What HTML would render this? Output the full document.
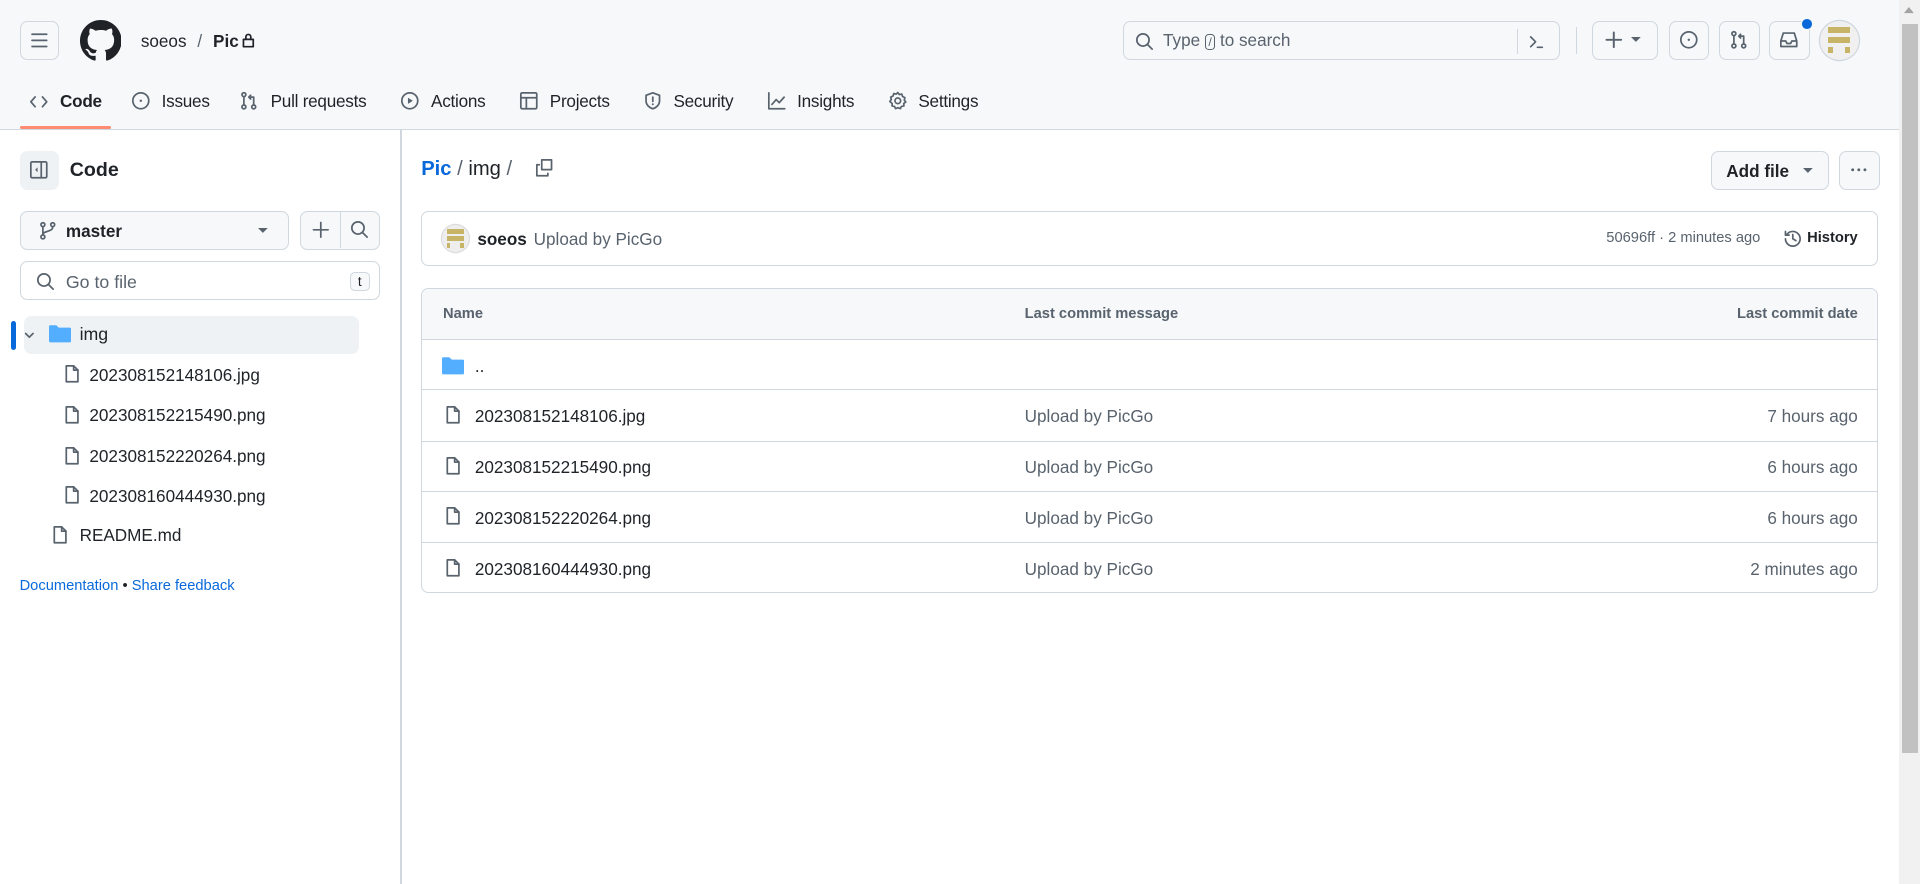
<!DOCTYPE html>
<html><head><meta charset="utf-8"><style>
html{zoom:1.22449}
body{margin:0;width:1568px;height:722px;overflow:hidden;position:relative;background:#fff;font-family:"Liberation Sans",sans-serif;color:#1f2328;font-size:14px}
.a{position:absolute;white-space:nowrap}
.btn{position:absolute;border:1px solid #d0d7de;border-radius:6px;background:#f6f8fa;box-sizing:border-box}
svg{display:block}
.ic{fill:none;stroke:#59636e;stroke-width:1.4;stroke-linecap:round;stroke-linejoin:round}
.row{position:absolute;left:0;right:0;border-top:1px solid #d0d7de;height:41px}
.t{position:absolute;top:13px;white-space:nowrap}
.tabs span{letter-spacing:-0.2px}
</style></head><body>
<!-- header -->
<div class="a" style="left:0;top:0;width:1551px;height:105px;background:#f6f8fa;border-bottom:1px solid #d0d7de"></div>
<div class="btn" style="left:16px;top:17px;width:32px;height:32px"><svg width="30" height="30"><path class="ic" d="M9 10h12M9 15h12M9 20h12"/></svg></div>
<svg class="a" style="left:65px;top:16px" width="34" height="34" viewBox="0 0 16 16"><path fill="#1f2328" d="M8 0C3.58 0 0 3.58 0 8c0 3.54 2.29 6.53 5.47 7.59.4.07.55-.17.55-.38 0-.19-.01-.82-.01-1.49-2.01.37-2.53-.49-2.69-.94-.09-.23-.48-.94-.82-1.13-.28-.15-.68-.52-.01-.53.63-.01 1.08.58 1.23.82.72 1.21 1.87.87 2.33.66.07-.52.28-.87.51-1.07-1.78-.2-3.64-.89-3.64-3.95 0-.87.31-1.59.82-2.15-.08-.2-.36-1.02.08-2.12 0 0 .67-.21 2.2.82.64-.18 1.32-.27 2-.27.68 0 1.36.09 2 .27 1.53-1.04 2.2-.82 2.2-.82.44 1.1.16 1.92.08 2.12.51.56.82 1.27.82 2.15 0 3.07-1.87 3.75-3.65 3.95.29.25.54.73.54 1.48 0 1.07-.01 1.93-.01 2.2 0 .21.15.46.55.38A8.013 8.013 0 0016 8c0-4.42-3.58-8-8-8z"/></svg>
<div class="a" style="left:115px;top:25px;font-size:14px">soeos <span style="color:#59636e;margin:0 5px">/</span> <b style="font-weight:600">Pic</b></div>
<svg class="a" style="left:197px;top:26px" width="12" height="13"><rect x="2" y="6" width="8" height="6" class="ic" style="stroke:#1f2328"/><path class="ic" style="stroke:#1f2328" d="M4 6V4a2 2 0 014 0v2"/></svg>
<!-- tabs -->
<div class="a tabs" style="top:74px;left:0;font-size:14px;color:#1f2328">
<svg class="a" style="left:24px;top:1px" width="16" height="16"><path class="ic" d="M5 4L1.5 8 5 12M11 4l3.5 4-3.5 4"/></svg>
<span class="a" style="left:49px;font-weight:600">Code</span>
<svg class="a" style="left:107px;top:0" width="16" height="16"><circle cx="8" cy="8" r="6.5" class="ic"/><circle cx="8" cy="8" r="1" fill="#59636e"/></svg>
<span class="a" style="left:132px">Issues</span>
<svg class="a" style="left:195px;top:0" width="16" height="16"><circle cx="4" cy="3" r="1.6" class="ic"/><circle cx="4" cy="13" r="1.6" class="ic"/><circle cx="12" cy="13" r="1.6" class="ic"/><path class="ic" d="M4 5v6M12 11V5H8M9.5 3.5L8 5l1.5 1.5"/></svg>
<span class="a" style="left:221px">Pull requests</span>
<svg class="a" style="left:327px;top:0" width="16" height="16"><circle cx="8" cy="8" r="6.5" class="ic"/><path d="M6.5 5.5v5l4-2.5z" fill="#59636e"/></svg>
<span class="a" style="left:352px">Actions</span>
<svg class="a" style="left:424px;top:0" width="16" height="16"><rect x="1.5" y="1.5" width="13" height="13" rx="1" class="ic"/><path class="ic" d="M1.5 5.5h13M6 5.5v9"/></svg>
<span class="a" style="left:449px">Projects</span>
<svg class="a" style="left:525px;top:0" width="16" height="16"><path class="ic" d="M8 1.5l5.5 2v4.5c0 3.3-2.5 5.6-5.5 6.5-3-.9-5.5-3.2-5.5-6.5V3.5z"/><path class="ic" d="M8 5v3.5"/><circle cx="8" cy="10.8" r=".8" fill="#59636e"/></svg>
<span class="a" style="left:550px">Security</span>
<svg class="a" style="left:626px;top:0" width="16" height="16"><path class="ic" d="M1.5 1.5v13h13M4 11l3.5-4 2.5 2.5L14 5"/></svg>
<span class="a" style="left:651px">Insights</span>
<svg class="a" style="left:725px;top:0" width="16" height="16"><circle cx="8" cy="8" r="2.3" class="ic"/><path class="ic" d="M8 1.3l1.3 1.6 2-.4.6 2 1.9.9-.5 2 1.2 1.6-1.6 1.2.1 2-2 .4-.9 1.8-1.9-.8-2 .8-.9-1.8-2-.4.1-2L1.5 8.6l1.2-1.6-.5-2 1.9-.9.6-2 2 .4z"/></svg>
<span class="a" style="left:750px">Settings</span>
</div>
<div class="a" style="left:16px;top:103px;width:75px;height:2px;background:#fd8c73;border-radius:2px"></div>
<!-- search -->
<div class="btn" style="left:917px;top:17px;width:357px;height:32px;background:#f6f8fa">
<svg class="a" style="left:9px;top:8px" width="16" height="16"><circle cx="6.5" cy="6.5" r="5" class="ic"/><path class="ic" d="M10.2 10.2L14 14"/></svg>
<span class="a" style="left:32px;top:7px;color:#59636e;font-size:14px">Type <span style="border:1px solid #59636e;border-radius:3px;font-size:10px;padding:0 2px">/</span> to search</span>
<div class="a" style="left:321px;top:6px;width:1px;height:20px;background:#d0d7de"></div>
<svg class="a" style="left:329px;top:8px" width="16" height="16"><path class="ic" d="M3 4l4 4-4 4M8.5 12.5h4"/></svg>
</div>
<div class="a" style="left:1287px;top:22px;width:1px;height:22px;background:#d0d7de"></div>
<div class="btn" style="left:1300px;top:17px;width:54px;height:32px"><svg class="a" style="left:9px;top:7px" width="16" height="16"><path class="ic" style="stroke-width:1.6" d="M8 2v12M2 8h12"/></svg><svg class="a" style="left:31px;top:12px" width="8" height="6"><path d="M0 0h8L4 4z" fill="#59636e"/></svg></div>
<div class="btn" style="left:1363px;top:17px;width:33px;height:32px"><svg class="a" style="left:7px;top:7px" width="16" height="16"><circle cx="8" cy="8" r="6.5" class="ic"/><circle cx="8" cy="8" r="1" fill="#59636e"/></svg></div>
<div class="btn" style="left:1404px;top:17px;width:33px;height:32px"><svg class="a" style="left:7px;top:7px" width="16" height="16"><circle cx="4" cy="3" r="1.6" class="ic"/><circle cx="4" cy="13" r="1.6" class="ic"/><circle cx="12" cy="13" r="1.6" class="ic"/><path class="ic" d="M4 5v6M12 11V5H8M9.5 3.5L8 5l1.5 1.5"/></svg></div>
<div class="btn" style="left:1445px;top:17px;width:33px;height:32px"><svg class="a" style="left:7px;top:7px" width="16" height="16"><path class="ic" d="M1.5 9L3.5 2.5h9L14.5 9v4.5h-13zM1.5 9h4l1 2h3l1-2h4"/></svg></div>
<div class="a" style="left:1471px;top:15px;width:8px;height:8px;border-radius:50%;background:#0969da;border:1px solid #f6f8fa"></div>
<div class="a" style="left:1486px;top:17px;width:32px;height:32px;border-radius:50%;background:#f0f0f0;overflow:hidden;box-shadow:0 0 0 1px #d0d7de">
<div class="a" style="left:7px;top:5px;width:18px;height:5px;background:#c8b466"></div>
<div class="a" style="left:7px;top:13px;width:18px;height:5px;background:#c8b466"></div>
<div class="a" style="left:7px;top:21px;width:4px;height:5px;background:#c8b466"></div>
<div class="a" style="left:21px;top:21px;width:4px;height:5px;background:#c8b466"></div></div>
<!-- scrollbar -->
<div class="a" style="left:1551px;top:0;width:17px;height:722px;background:#f1f1f1"></div>
<div class="a" style="left:1553px;top:20px;width:13px;height:595px;background:#c1c1c1"></div>
<svg class="a" style="left:1555px;top:6px" width="9" height="6"><path d="M0 5h8L4 0z" fill="#a3a3a3"/></svg>
<!-- sidebar -->
<div class="a" style="left:327px;top:106px;width:1px;height:616px;background:#d0d7de"></div>
<div class="a" style="left:16px;top:123px;width:32px;height:32px;border-radius:6px;background:#eff2f5"><svg class="a" style="left:8px;top:8px" width="16" height="16"><rect x="1.5" y="1.5" width="13" height="13" rx="1" class="ic"/><path class="ic" d="M10 1.5v13"/><path d="M7 6v4L5 8z" fill="#59636e"/></svg></div>
<div class="a" style="left:57px;top:130px;font-size:16px;font-weight:600">Code</div>
<div class="btn" style="left:16px;top:172px;width:220px;height:32px">
<svg class="a" style="left:14px;top:8px" width="16" height="16"><circle cx="4" cy="3" r="1.6" class="ic"/><circle cx="4" cy="13" r="1.6" class="ic"/><circle cx="12" cy="3" r="1.6" class="ic"/><path class="ic" d="M4 5v6M12 5c0 4-8 3-8 6"/></svg>
<span class="a" style="left:37px;top:8px;font-weight:600">master</span>
<svg class="a" style="left:194px;top:13px" width="8" height="6"><path d="M0 0h8L4 4z" fill="#59636e"/></svg></div>
<div class="btn" style="left:245px;top:172px;width:65px;height:32px"><div class="a" style="left:32px;top:0;width:1px;height:30px;background:#d0d7de"></div>
<svg class="a" style="left:8px;top:7px" width="16" height="16"><path class="ic" d="M8 2v12M2 8h12"/></svg>
<svg class="a" style="left:40px;top:7px" width="16" height="16"><circle cx="6.5" cy="6.5" r="5" class="ic"/><path class="ic" d="M10.2 10.2L14 14"/></svg></div>
<div class="btn" style="left:16px;top:213px;width:294px;height:32px;background:#fff">
<svg class="a" style="left:13px;top:8px" width="16" height="16"><circle cx="6.5" cy="6.5" r="5" class="ic"/><path class="ic" d="M10.2 10.2L14 14"/></svg>
<span class="a" style="left:37px;top:8px;color:#59636e;font-size:14.5px">Go to file</span>
<span class="a" style="left:269px;top:8px;width:16px;height:16px;border:1px solid #d0d7de;border-radius:4px;box-sizing:border-box;font-size:11px;text-align:center;line-height:14px;color:#1f2328;background:#f6f8fa">t</span></div>
<div class="a" style="left:20px;top:258px;width:273px;height:31px;border-radius:6px;background:#eff2f5"></div>
<div class="a" style="left:9px;top:262px;width:4px;height:24px;border-radius:3px;background:#0969da"></div>
<svg class="a" style="left:18px;top:268px" width="12" height="12"><path class="ic" d="M3 4.5l3 3 3-3"/></svg>
<svg class="a" style="left:40px;top:265px" width="18" height="16"><path d="M0 2a1 1 0 011-1h5l2 2h9a1 1 0 011 1v10a1 1 0 01-1 1H1a1 1 0 01-1-1z" fill="#54aeff"/></svg>
<div class="a" style="left:65px;top:265px;font-size:14.5px">img</div>
<div class="a" style="left:0;top:0;font-size:14px">
<svg class="a" style="left:51px;top:297px" width="16" height="16"><path class="ic" d="M3.5 1.5h6l3.5 3.5v9.5h-9.5z"/><path class="ic" d="M9.5 1.5V5H13"/></svg><span class="a" style="left:73px;top:298px">202308152148106.jpg</span>
<svg class="a" style="left:51px;top:331px" width="16" height="16"><path class="ic" d="M3.5 1.5h6l3.5 3.5v9.5h-9.5z"/><path class="ic" d="M9.5 1.5V5H13"/></svg><span class="a" style="left:73px;top:331px">202308152215490.png</span>
<svg class="a" style="left:51px;top:364px" width="16" height="16"><path class="ic" d="M3.5 1.5h6l3.5 3.5v9.5h-9.5z"/><path class="ic" d="M9.5 1.5V5H13"/></svg><span class="a" style="left:73px;top:364px">202308152220264.png</span>
<svg class="a" style="left:51px;top:396px" width="16" height="16"><path class="ic" d="M3.5 1.5h6l3.5 3.5v9.5h-9.5z"/><path class="ic" d="M9.5 1.5V5H13"/></svg><span class="a" style="left:73px;top:397px">202308160444930.png</span>
<svg class="a" style="left:41px;top:429px" width="16" height="16"><path class="ic" d="M3.5 1.5h6l3.5 3.5v9.5h-9.5z"/><path class="ic" d="M9.5 1.5V5H13"/></svg><span class="a" style="left:65px;top:429px">README.md</span>
</div>
<div class="a" style="left:16px;top:472px;font-size:12px;color:#0969da">Documentation <span style="color:#1f2328">•</span> Share feedback</div>
<!-- main -->
<div class="a" style="left:344px;top:129px;font-size:16.5px"><span style="color:#0969da;font-weight:600">Pic</span> <span style="color:#59636e">/</span> img <span style="color:#59636e">/</span></div>
<svg class="a" style="left:437px;top:129px" width="16" height="16"><path class="ic" d="M5.5 1.5h8v8h-8zM3.5 5.5h-2v9h9v-2"/></svg>
<div class="btn" style="left:1397px;top:123px;width:97px;height:32px"><span class="a" style="left:12px;top:8px;font-weight:600;font-size:14px">Add file</span><svg class="a" style="left:75px;top:13px" width="8" height="6"><path d="M0 0h8L4 4z" fill="#59636e"/></svg></div>
<div class="btn" style="left:1502px;top:123px;width:33px;height:32px"><svg class="a" style="left:7px;top:7px" width="16" height="16"><circle cx="3" cy="8" r="1.2" fill="#59636e"/><circle cx="8" cy="8" r="1.2" fill="#59636e"/><circle cx="13" cy="8" r="1.2" fill="#59636e"/></svg></div>
<div class="a" style="left:344px;top:172px;width:1190px;height:45px;border:1px solid #d0d7de;border-radius:6px;box-sizing:border-box">
<div class="a" style="left:16px;top:11px;width:22px;height:22px;border-radius:50%;background:#eee;overflow:hidden;box-shadow:0 0 0 1px #ddd">
<div class="a" style="left:4px;top:3px;width:14px;height:4px;background:#c8b466"></div><div class="a" style="left:4px;top:9px;width:14px;height:4px;background:#c8b466"></div><div class="a" style="left:4px;top:15px;width:3px;height:4px;background:#c8b466"></div><div class="a" style="left:15px;top:15px;width:3px;height:4px;background:#c8b466"></div></div>
<span class="a" style="left:45px;top:14px;font-weight:600">soeos</span>
<span class="a" style="left:91px;top:14px;color:#59636e;font-size:14px">Upload by PicGo</span>
<span class="a" style="left:967px;top:15px;color:#59636e;font-size:12px">50696ff · 2 minutes ago</span>
<svg class="a" style="left:1111px;top:14px" width="16" height="16"><path class="ic" d="M2 8a6 6 0 106-6 6 6 0 00-5 2.7M2 2v3h3M8 4.5V8l2.5 1.5"/></svg>
<span class="a" style="left:1131px;top:15px;font-weight:600;font-size:12px">History</span></div>
<div class="a" style="left:344px;top:235px;width:1190px;height:249px;border:1px solid #d0d7de;border-radius:6px;box-sizing:border-box;overflow:hidden;font-size:14px">
<div class="a" style="left:0;top:0;right:0;height:41px;background:#f6f8fa"></div>
<span class="a" style="left:17px;top:14px;font-size:12px;color:#59636e;font-weight:600">Name</span>
<span class="a" style="left:492px;top:14px;font-size:12px;color:#59636e;font-weight:600">Last commit message</span>
<span class="a" style="right:16px;top:14px;font-size:12px;color:#59636e;font-weight:600">Last commit date</span>
<div class="row" style="top:41px"><svg class="a" style="left:16px;top:13px" width="18" height="16"><path d="M0 2a1 1 0 011-1h5l2 2h9a1 1 0 011 1v10a1 1 0 01-1 1H1a1 1 0 01-1-1z" fill="#54aeff"/></svg><span class="t" style="left:43px">..</span></div>
<div class="row" style="top:82px"><svg class="a" style="left:17px;top:12px" width="16" height="16"><path class="ic" d="M3.5 1.5h6l3.5 3.5v9.5h-9.5z"/><path class="ic" d="M9.5 1.5V5H13"/></svg><span class="t" style="left:43px">202308152148106.jpg</span><span class="t" style="left:492px;color:#59636e">Upload by PicGo</span><span class="t" style="right:16px;color:#59636e">7 hours ago</span></div>
<div class="row" style="top:124px"><svg class="a" style="left:17px;top:12px" width="16" height="16"><path class="ic" d="M3.5 1.5h6l3.5 3.5v9.5h-9.5z"/><path class="ic" d="M9.5 1.5V5H13"/></svg><span class="t" style="left:43px">202308152215490.png</span><span class="t" style="left:492px;color:#59636e">Upload by PicGo</span><span class="t" style="right:16px;color:#59636e">6 hours ago</span></div>
<div class="row" style="top:165px"><svg class="a" style="left:17px;top:12px" width="16" height="16"><path class="ic" d="M3.5 1.5h6l3.5 3.5v9.5h-9.5z"/><path class="ic" d="M9.5 1.5V5H13"/></svg><span class="t" style="left:43px">202308152220264.png</span><span class="t" style="left:492px;color:#59636e">Upload by PicGo</span><span class="t" style="right:16px;color:#59636e">6 hours ago</span></div>
<div class="row" style="top:207px"><svg class="a" style="left:17px;top:12px" width="16" height="16"><path class="ic" d="M3.5 1.5h6l3.5 3.5v9.5h-9.5z"/><path class="ic" d="M9.5 1.5V5H13"/></svg><span class="t" style="left:43px">202308160444930.png</span><span class="t" style="left:492px;color:#59636e">Upload by PicGo</span><span class="t" style="right:16px;color:#59636e">2 minutes ago</span></div>
</div>
</body></html>
